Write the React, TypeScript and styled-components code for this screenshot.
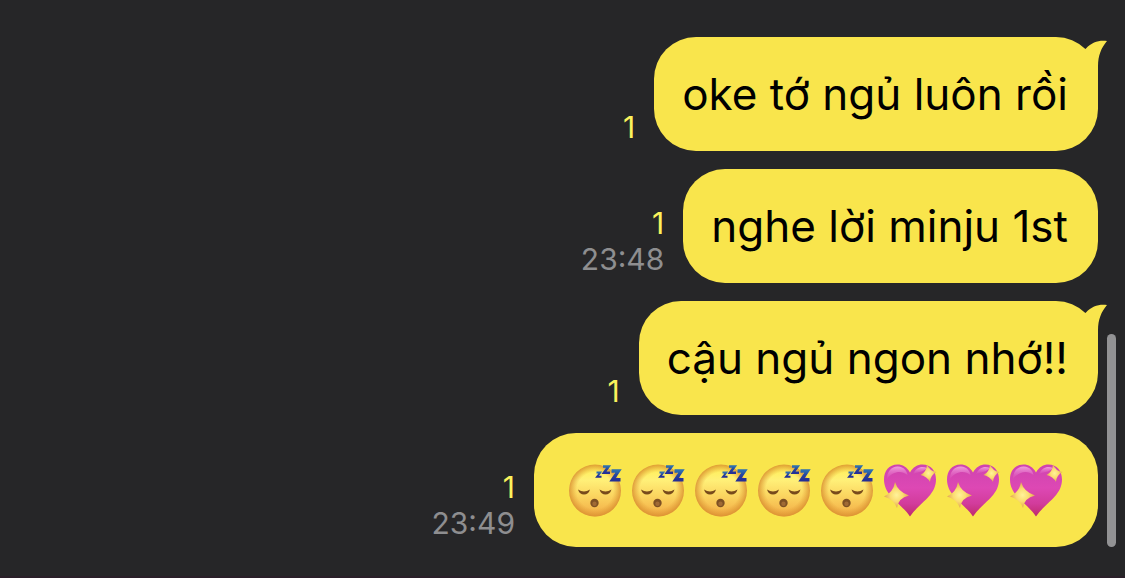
import React from "react";
import styled, { createGlobalStyle } from "styled-components";

const GlobalStyle = createGlobalStyle`
  * { box-sizing: border-box; }
  body {
    margin: 0;
    background: #262628;
    font-family: Inter, "Liberation Sans", sans-serif;
  }
`;

const Chat = styled.main`
  position: relative;
  min-height: 100vh;
  padding: 37px 27px 28px;
  background: #262628;
  border-bottom: 2px solid #2a1f29;
`;

const MessageList = styled.ol`
  display: flex;
  flex-direction: column;
  gap: 18px;
  margin: 0;
  padding: 0;
  list-style: none;
`;

const MessageRow = styled.li`
  display: flex;
  justify-content: flex-end;
  align-items: flex-end;
  gap: 19px;
`;

const Meta = styled.div`
  display: flex;
  flex-direction: column;
  align-items: flex-end;
  padding-bottom: 6px;
  font-size: 30px;
  line-height: 36px;
`;

const Unread = styled.span`
  color: #fbf25c;
`;

const Time = styled.time`
  color: #8e8e90;
`;

const Bubble = styled.div<{ $emoji?: boolean }>`
  position: relative;
  display: flex;
  align-items: center;
  height: 114px;
  padding: 0 30px 0 ${(p) => (p.$emoji ? 30 : 28)}px;
  border-radius: 42px;
  background: #f9e54c;
  color: #000;
  font-size: 44px;
  line-height: 56px;
  white-space: nowrap;
`;

const Tail = styled.svg`
  position: absolute;
  top: 0;
  right: -10px;
  width: 40px;
  height: 50px;
`;

const Emoji = styled.svg`
  display: block;
  width: 63px;
  height: 64px;
`;

const Paints = styled.svg`
  display: block;
  width: 0;
  height: 0;
`;

const ScrollThumb = styled.div`
  position: absolute;
  right: 9px;
  bottom: 29px;
  width: 9px;
  height: 213px;
  border-radius: 5px;
  background: #929294;
`;

function BubbleTail() {
  return (
    <Tail viewBox="0 0 40 50" aria-hidden="true">
      <path d="M12 46V16L18 11.5C24 5 31 3 39 4C33 11 30 19 30 29V46Z" fill="#f9e54c" />
    </Tail>
  );
}

function Sleeping() {
  return (
    <Emoji viewBox="0 0 63 64" role="img" aria-label="sleeping face">
      <circle cx="31" cy="32.5" r="26" fill="url(#face)" />
      <circle cx="31" cy="32.5" r="26" fill="url(#faceEdge)" />
      <path d="M14 31.5Q20 35.6 26 31.5Q24.5 36.6 20 36.6Q15.500 36.600 14 31.500Z" fill="#774a1c" />
      <path d="M35.500 31.500Q41.500 35.600 47.500 31.500Q46 36.600 41.500 36.600Q37 36.600 35.500 31.500Z" fill="#774a1c" />
      <circle cx="30.5" cy="45" r="4.2" fill="#7d5024" />
      <circle cx="30.5" cy="45.8" r="2.2" fill="#a06a35" />
      <g fill="none" stroke="url(#sleep)" strokeLinejoin="miter">
        <path d="M32.500 14.500H36.300L33 18.800H37.500" strokeWidth="1.900" />
        <path d="M39 8.500H44.600L40 14.800H46" strokeWidth="2.600" />
        <path d="M47.500 13H54.500L48.500 21.800H56.500" strokeWidth="3.400" />
      </g>
    </Emoji>
  );
}

function SparklingHeart() {
  return (
    <Emoji viewBox="0 0 63 64" role="img" aria-label="sparkling heart">
      <path
        d="M31 14.500C28 9 23.500 6.500 18.500 6.500C10 6.500 5 13 5 21.500C5 38 22 45 31 58.500C40 45 57 38 57 21.500C57 13 52 6.500 43.500 6.500C38.500 6.500 34 9 31 14.500Z"
        fill="url(#heart)"
      />
      <path d="M8 21C8 13 13 8 19 8.500C25 9 28 13 28.500 17C22 11.500 13 14 8 21Z" fill="url(#gloss)" />
      <path d="M34 16C37 10 42 7.500 48 10C45 14 39 14 34 16Z" fill="url(#gloss)" />
      <path d="M16 24Q19 34 30 37.500Q19 40 18 50Q14.500 41 5 38.500Q14.500 34 16 24Z" fill="url(#spark)" />
      <path d="M48 6.500Q50.500 13 57.500 14Q51.500 17 51 24Q48 18.500 41.500 17Q47.500 14 48 6.500Z" fill="url(#spark)" />
    </Emoji>
  );
}

function EmojiPaints() {
  return (
    <Paints aria-hidden="true">
      <defs>
        <linearGradient id="face" x1="0" y1="0" x2="0" y2="1">
          <stop offset="0" stopColor="#ffee4e" />
          <stop offset=".3" stopColor="#fff078" />
          <stop offset=".6" stopColor="#fbd560" />
          <stop offset="1" stopColor="#f2ab45" />
        </linearGradient>
        <radialGradient id="faceEdge">
          <stop offset=".7" stopColor="#e09a34" stopOpacity="0" />
          <stop offset="1" stopColor="#d98f30" stopOpacity=".85" />
        </radialGradient>
        <linearGradient id="sleep" x1="0" y1="0" x2="0" y2="1">
          <stop offset="0" stopColor="#2d6fae" />
          <stop offset=".4" stopColor="#2748a0" />
          <stop offset="1" stopColor="#242f96" />
        </linearGradient>
        <linearGradient id="heart" x1="0" y1="0" x2="0" y2="1">
          <stop offset="0" stopColor="#cf44b0" />
          <stop offset=".45" stopColor="#dd48b4" />
          <stop offset=".75" stopColor="#d23c9c" />
          <stop offset="1" stopColor="#bf2a6c" />
        </linearGradient>
        <linearGradient id="gloss" x1="0" y1="0" x2="0" y2="1">
          <stop offset="0" stopColor="#f3a8e0" stopOpacity=".9" />
          <stop offset="1" stopColor="#e66cc8" stopOpacity=".1" />
        </linearGradient>
        <radialGradient id="spark">
          <stop offset="0" stopColor="#fff29a" />
          <stop offset=".5" stopColor="#fbdc70" />
          <stop offset="1" stopColor="#e2a452" />
        </radialGradient>
      </defs>
    </Paints>
  );
}

type Message = { text?: string; sleeping?: number; hearts?: number; time?: string; tail?: boolean };

const messages: Message[] = [
  { text: "oke tớ ngủ luôn rồi", tail: true },
  { text: "nghe lời minju 1st", time: "23:48" },
  { text: "cậu ngủ ngon nhớ!!", tail: true },
  { sleeping: 5, hearts: 3, time: "23:49" },
];

export default function App() {
  return (
    <Chat>
      <GlobalStyle />
      <EmojiPaints />
      <MessageList>
        {messages.map((message, index) => (
          <MessageRow key={index}>
            <Meta>
              <Unread>1</Unread>
              {message.time && <Time>{message.time}</Time>}
            </Meta>
            <Bubble $emoji={!message.text}>
              {message.tail && <BubbleTail />}
              {message.text}
              {Array.from({ length: message.sleeping ?? 0 }, (_, n) => (
                <Sleeping key={`sleeping-${n}`} />
              ))}
              {Array.from({ length: message.hearts ?? 0 }, (_, n) => (
                <SparklingHeart key={`heart-${n}`} />
              ))}
            </Bubble>
          </MessageRow>
        ))}
      </MessageList>
      <ScrollThumb />
    </Chat>
  );
}
